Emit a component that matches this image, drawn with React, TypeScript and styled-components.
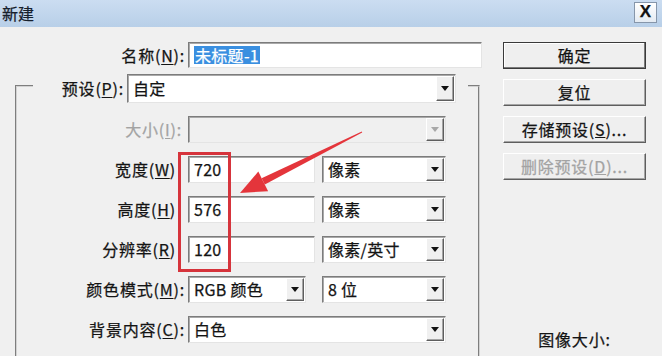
import React from 'react';
import styled, { createGlobalStyle } from 'styled-components';

const GlobalStyle = createGlobalStyle`
  html, body { margin: 0; padding: 0; background: #f0f0f0; }
  body { font-family: "Noto Sans CJK SC", "Liberation Sans", sans-serif; }
`;

const Window = styled.div`
  position: relative;
  width: 662px;
  height: 356px;
  overflow: hidden;
  background: #f0f0f0;
  display: flex;
  flex-direction: column;
  color: #141414;
  font-size: 16px;
  line-height: 19px;
  -webkit-text-stroke: 0.25px currentColor;
`;

const TitleBar = styled.div`
  flex: none;
  height: 27px;
  display: flex;
  align-items: center;
  justify-content: space-between;
  padding: 0 5px 0 2px;
  background: linear-gradient(#cbddf1, #b8cfe8);
`;

const Title = styled.span`
  font-size: 16px;
  color: #16202c;
`;

const CloseBox = styled.div`
  width: 21px;
  height: 19px;
  margin-top: -3px;
  border: 1px solid #8696aa;
  background: linear-gradient(#ffffff, #e4ebf3);
  display: flex;
  align-items: center;
  justify-content: center;
  font: bold 17px "Liberation Sans", sans-serif;
  color: #111;
`;

const Body = styled.div`
  flex: none;
  height: 329px;
  box-sizing: border-box;
  display: grid;
  grid-template-columns: 482px 143px;
  grid-template-rows: 100%;
  column-gap: 21px;
  padding-top: 15px;
`;

const LeftCol = styled.div`
  display: flex;
  flex-direction: column;
  min-height: 0;
`;

const Row = styled.div`
  display: flex;
  align-items: center;
  height: 27px;
`;

const Label = styled.span<{ $width: number; $pad?: number; $disabled?: boolean }>`
  flex: none;
  width: ${(p) => p.$width}px;
  padding-right: ${(p) => p.$pad ?? 3}px;
  box-sizing: border-box;
  text-align: right;
  white-space: nowrap;
  letter-spacing: 0.8px;
  color: ${(p) => (p.$disabled ? '#a3a3a3' : '#141414')};
  u { text-decoration-thickness: 1px; text-underline-offset: 2px; }
`;

const Field = styled.div<{ $width: number; $height?: number; $disabled?: boolean }>`
  flex: none;
  width: ${(p) => p.$width}px;
  height: ${(p) => p.$height ?? 27}px;
  box-sizing: border-box;
  display: flex;
  align-items: stretch;
  border: 1px solid;
  border-color: #7c7c7c #e4e4e4 #e4e4e4 #7c7c7c;
  box-shadow: inset 1px 1px 0 #a9a9a9;
  background: ${(p) => (p.$disabled ? '#f0f0f0' : '#ffffff')};
  font-size: 16px;
`;

const Value = styled.span`
  flex: 1;
  display: flex;
  align-items: center;
  padding-left: 5px;
  white-space: nowrap;
  letter-spacing: 0.3px;
`;

const Selected = styled.span`
  background: #3a8fe0;
  color: #ffffff;
  padding: 0 1px;
  line-height: 18px;
`;

const DropButton = styled.span`
  flex: none;
  width: 18px;
  margin: 1px 1px 1px 0;
  box-sizing: border-box;
  background: #f0f0f0;
  border: 1px solid;
  border-color: #ffffff #5e5e5e #5e5e5e #ffffff;
  box-shadow: inset -1px -1px 0 #a5a5a5;
  display: flex;
  align-items: center;
  justify-content: center;
`;

const Caret = styled.span<{ $disabled?: boolean }>`
  width: 0;
  height: 0;
  border-left: 4px solid transparent;
  border-right: 4px solid transparent;
  border-top: 5px solid ${(p) => (p.$disabled ? '#a8a8a8' : '#111')};
`;

const Group = styled.fieldset`
  margin: 0 2px 0 15px;
  padding: 0 0 40px 0;
  border: 2px groove #d2d2d2;
  min-width: 0;
`;

const Legend = styled.legend`
  margin-left: 16px;
  padding: 6px 12px 0 0;
  display: flex;
  align-items: center;
`;

const Rows = styled.div`
  display: flex;
  flex-direction: column;
  gap: 13px;
  padding-top: 13px;
`;

const Controls = styled.div<{ $gap?: number }>`
  display: flex;
  gap: ${(p) => p.$gap ?? 7}px;
`;

const RightCol = styled.div`
  display: flex;
  flex-direction: column;
  gap: 10px;
  min-height: 0;
  padding-bottom: 7px;
`;

const Button = styled.div<{ $default?: boolean; $disabled?: boolean }>`
  flex: none;
  height: 27px;
  box-sizing: border-box;
  display: flex;
  align-items: center;
  justify-content: center;
  background: #efefef;
  border: 1px solid;
  border-color: ${(p) => (p.$default ? '#3a3a3a' : '#ffffff #5e5e5e #5e5e5e #ffffff')};
  box-shadow: ${(p) => (p.$default ? 'inset -1px -1px 0 #7a7a7a, inset 1px 1px 0 #ffffff' : 'inset -1px -1px 0 #a5a5a5')};
  color: ${(p) => (p.$disabled ? '#a3a3a3' : '#141414')};
  letter-spacing: 0.8px;
  white-space: nowrap;
`;

const SizeCaption = styled.div`
  margin-top: auto;
  text-align: center;
  letter-spacing: 0.8px;
`;

const Overlay = styled.svg`
  position: absolute;
  left: 0;
  top: 0;
  pointer-events: none;
`;

type SelectProps = { width: number; height?: number; value?: string; disabled?: boolean };

const Select = ({ width, height, value, disabled }: SelectProps) => (
  <Field $width={width} $height={height} $disabled={disabled}>
    <Value>{value}</Value>
    <DropButton>
      <Caret $disabled={disabled} />
    </DropButton>
  </Field>
);

const Text = ({ width, value }: { width: number; value: string }) => (
  <Field $width={width}>
    <Value>{value}</Value>
  </Field>
);

const App: React.FC = () => {
  return (
    <>
      <GlobalStyle />
      <Window>
        <TitleBar>
          <Title>新建</Title>
          <CloseBox>X</CloseBox>
        </TitleBar>
        <Body>
          <LeftCol>
            <Row>
              <Label $width={188}>名称(<u>N</u>):</Label>
              <Field $width={294} $height={26}>
                <Value>
                  <Selected>未标题-1</Selected>
                </Value>
              </Field>
            </Row>
            <Group>
              <Legend>
                <Label $width={94}>预设(<u>P</u>):</Label>
                <Select width={329} height={29} value="自定" />
              </Legend>
              <Rows>
                <Row>
                  <Label $width={171} $pad={6} $disabled>
                    大小(<u>I</u>):
                  </Label>
                  <Select width={258} disabled />
                </Row>
                <Row>
                  <Label $width={171} $pad={12}>宽度(<u>W</u>)</Label>
                  <Controls>
                    <Text width={127} value="720" />
                    <Select width={124} value="像素" />
                  </Controls>
                </Row>
                <Row>
                  <Label $width={171} $pad={12}>高度(<u>H</u>)</Label>
                  <Controls>
                    <Text width={127} value="576" />
                    <Select width={124} value="像素" />
                  </Controls>
                </Row>
                <Row>
                  <Label $width={171} $pad={12}>分辨率(<u>R</u>)</Label>
                  <Controls>
                    <Text width={127} value="120" />
                    <Select width={124} value="像素/英寸" />
                  </Controls>
                </Row>
                <Row>
                  <Label $width={171}>颜色模式(<u>M</u>):</Label>
                  <Controls $gap={16}>
                    <Select width={118} value="RGB 颜色" />
                    <Select width={124} value="8 位" />
                  </Controls>
                </Row>
                <Row>
                  <Label $width={171}>背景内容(<u>C</u>):</Label>
                  <Select width={258} value="白色" />
                </Row>
              </Rows>
            </Group>
          </LeftCol>
          <RightCol>
            <Button $default>确定</Button>
            <Button>复位</Button>
            <Button>
              存储预设(<u>S</u>)...
            </Button>
            <Button $disabled>
              删除预设(<u>D</u>)...
            </Button>
            <SizeCaption>图像大小:</SizeCaption>
          </RightCol>
        </Body>
        <Overlay width={662} height={356} viewBox="0 0 662 356">
          <rect x={179.5} y={153.5} width={50} height={117} fill="none" stroke="#d6343c" strokeWidth={3} />
          <polygon points="361.8,131.6 362.2,132.4 264.8,184.5 261.6,178.3" fill="#e4353b" />
          <polygon points="240,193 258.3,171.6 268.1,191.2" fill="#e4353b" />
        </Overlay>
      </Window>
    </>
  );
};

export default App;
